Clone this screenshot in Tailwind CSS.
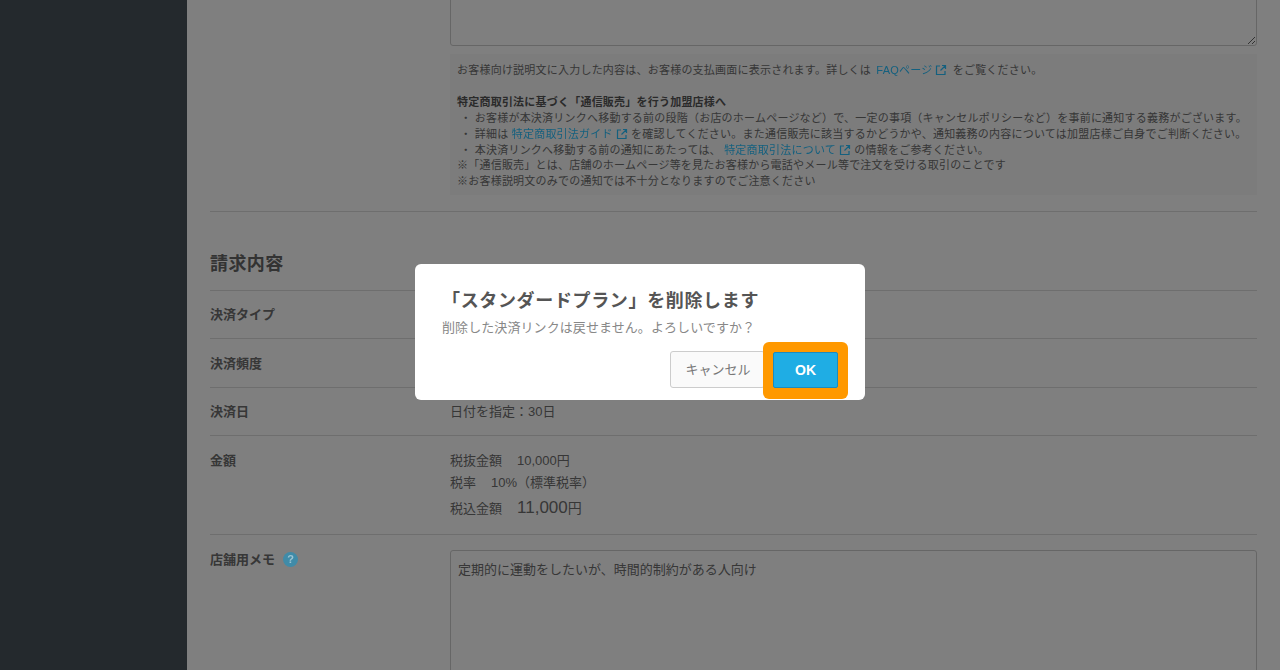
<!DOCTYPE html>
<html lang="ja">
<head>
  <meta charset="UTF-8" />
  <title>決済リンク</title>
  <script src="https://cdn.jsdelivr.net/npm/@tailwindcss/browser@4"></script>
</head>
<body class="h-[670px] overflow-hidden bg-white text-[#6e6e6e] font-['Liberation_Sans','Noto_Sans_CJK_JP',sans-serif]">

  <div class="flex h-[670px] overflow-hidden">
    <!-- sidebar -->
    <aside class="w-[187px] shrink-0 bg-[#48525a]"></aside>

    <!-- main -->
    <main class="flex-1 pl-[23px] pr-[23px]">
      <div class="flex">
        <div class="w-[240px] shrink-0"></div>
        <div class="flex-1">
          <textarea readonly class="block w-full h-[100px] mt-[-54px] border border-[#ccc] rounded-[3px] bg-white"></textarea>
          <div class="mt-[8px] h-[141px] bg-[#f8f8f8] pl-[7px] pt-[9px] text-[11px] tracking-[0.22px] leading-[15.9px] whitespace-nowrap">
            <p>お客様向け説明文に入力した内容は、お客様の支払画面に表示されます。詳しくは <a class="relative z-10 ml-[2px] mr-[2px] text-[#14607f]">FAQページ<svg class="inline-block w-[12px] h-[12px] ml-[3px] align-[-2px]" viewBox="0 0 12 12" fill="none" stroke="currentColor" stroke-width="1.2"><path d="M5 2H1.5v8.5H10V7M7 1.5h3.5V5M10.5 1.5 5.5 6.5"/></svg></a> をご覧ください。</p>
            <p class="mt-[15.9px] font-bold text-[#555]">特定商取引法に基づく「通信販売」を行う加盟店様へ</p>
            <p>&nbsp;・ お客様が本決済リンクへ移動する前の段階（お店のホームページなど）で、一定の事項（キャンセルポリシーなど）を事前に通知する義務がございます。</p>
            <p>&nbsp;・ 詳細は <a class="relative z-10 text-[#14607f]">特定商取引法ガイド<svg class="inline-block w-[12px] h-[12px] ml-[3px] align-[-2px]" viewBox="0 0 12 12" fill="none" stroke="currentColor" stroke-width="1.2"><path d="M5 2H1.5v8.5H10V7M7 1.5h3.5V5M10.5 1.5 5.5 6.5"/></svg></a> を確認してください。また通信販売に該当するかどうかや、通知義務の内容については加盟店様ご自身でご判断ください。</p>
            <p>&nbsp;・ 本決済リンクへ移動する前の通知にあたっては、 <a class="relative z-10 text-[#14607f]">特定商取引法について<svg class="inline-block w-[12px] h-[12px] ml-[3px] align-[-2px]" viewBox="0 0 12 12" fill="none" stroke="currentColor" stroke-width="1.2"><path d="M5 2H1.5v8.5H10V7M7 1.5h3.5V5M10.5 1.5 5.5 6.5"/></svg></a> の情報をご参考ください。</p>
            <p>※「通信販売」とは、店舗のホームページ等を見たお客様から電話やメール等で注文を受ける取引のことです</p>
            <p>※お客様説明文のみでの通知では不十分となりますのでご注意ください</p>
          </div>
        </div>
      </div>

      <div class="mt-[16px] border-t border-[#ddd]"></div>

      <!-- 請求内容 -->
      <h2 class="h-[79px] pt-[38px] text-[18px] tracking-[0.4px] leading-[28px] font-bold text-[#666] border-b border-[#ddd]">請求内容</h2>

      <div class="flex h-[48px] pt-[14px] text-[13px] leading-[20px] border-b border-[#ddd]">
        <div class="w-[240px] shrink-0 font-bold">決済タイプ</div>
      </div>
      <div class="flex h-[49px] pt-[15px] text-[13px] leading-[20px] border-b border-[#ddd]">
        <div class="w-[240px] shrink-0 font-bold">決済頻度</div>
      </div>
      <div class="flex h-[48px] pt-[14px] text-[13px] leading-[20px] border-b border-[#ddd]">
        <div class="w-[240px] shrink-0 font-bold">決済日</div>
        <div>日付を指定：30日</div>
      </div>

      <div class="flex h-[99px] pt-[15px] text-[13px] leading-[20px] border-b border-[#ddd]">
        <div class="w-[240px] shrink-0 font-bold">金額</div>
        <div>
          <div class="flex gap-[15px]"><span>税抜金額</span><span>10,000円</span></div>
          <div class="flex gap-[15px] mt-[2px]"><span>税率</span><span>10%（標準税率）</span></div>
          <div class="flex gap-[15px] mt-[5px] items-baseline"><span>税込金額</span><span><span class="text-[17px]">11,000</span><span class="text-[14px]">円</span></span></div>
        </div>
      </div>

      <div class="flex pt-[15px] text-[13px] leading-[20px]">
        <div class="w-[240px] shrink-0 flex items-start gap-[8px] font-bold">
          <span>店舗用メモ</span>
          <span class="relative z-10 mt-[2px] w-[15px] h-[15px] rounded-full bg-[#408ba8] text-[#9cc4d2] text-[11px] leading-[15px] text-center font-bold">?</span>
        </div>
        <div class="flex-1 h-[200px] border border-[#ccc] rounded-[3px] bg-white px-[7px] pt-[9px]">定期的に運動をしたいが、時間的制約がある人向け</div>
      </div>
    </main>
  </div>

  <!-- modal -->
  <div class="fixed inset-0 bg-black/50 flex justify-center items-start pt-[264px]">
    <div class="w-[450px] h-[136px] bg-white rounded-[6px] pl-[27px] pr-[17px] pt-[23px]">
      <h3 class="text-[18px] tracking-[0.65px] leading-[28px] font-bold text-[#555]">「スタンダードプラン」を削除します</h3>
      <p class="mt-[3px] text-[13px] tracking-[0.08px] leading-[20px] text-[#888]">削除した決済リンクは戻せません。よろしいですか？</p>
      <div class="flex justify-end items-start mt-[4px]">
        <button class="mt-[9px] w-[95px] h-[37px] border border-[#ccc] rounded-[3px] bg-[#fafafa] text-[13px] text-[#777] pl-[1px]">キャンセル</button>
        <div class="relative ml-[-2px] rounded-[6px] bg-[#ff9900] pt-[10px] pb-[11px] px-[10px]">
          <button class="block w-[65px] h-[36px] rounded-[2px] border border-[#1a8cc0] bg-[#1fade4] text-white text-[14px] font-bold">OK</button>
        </div>
      </div>
    </div>
  </div>
</body>
</html>
